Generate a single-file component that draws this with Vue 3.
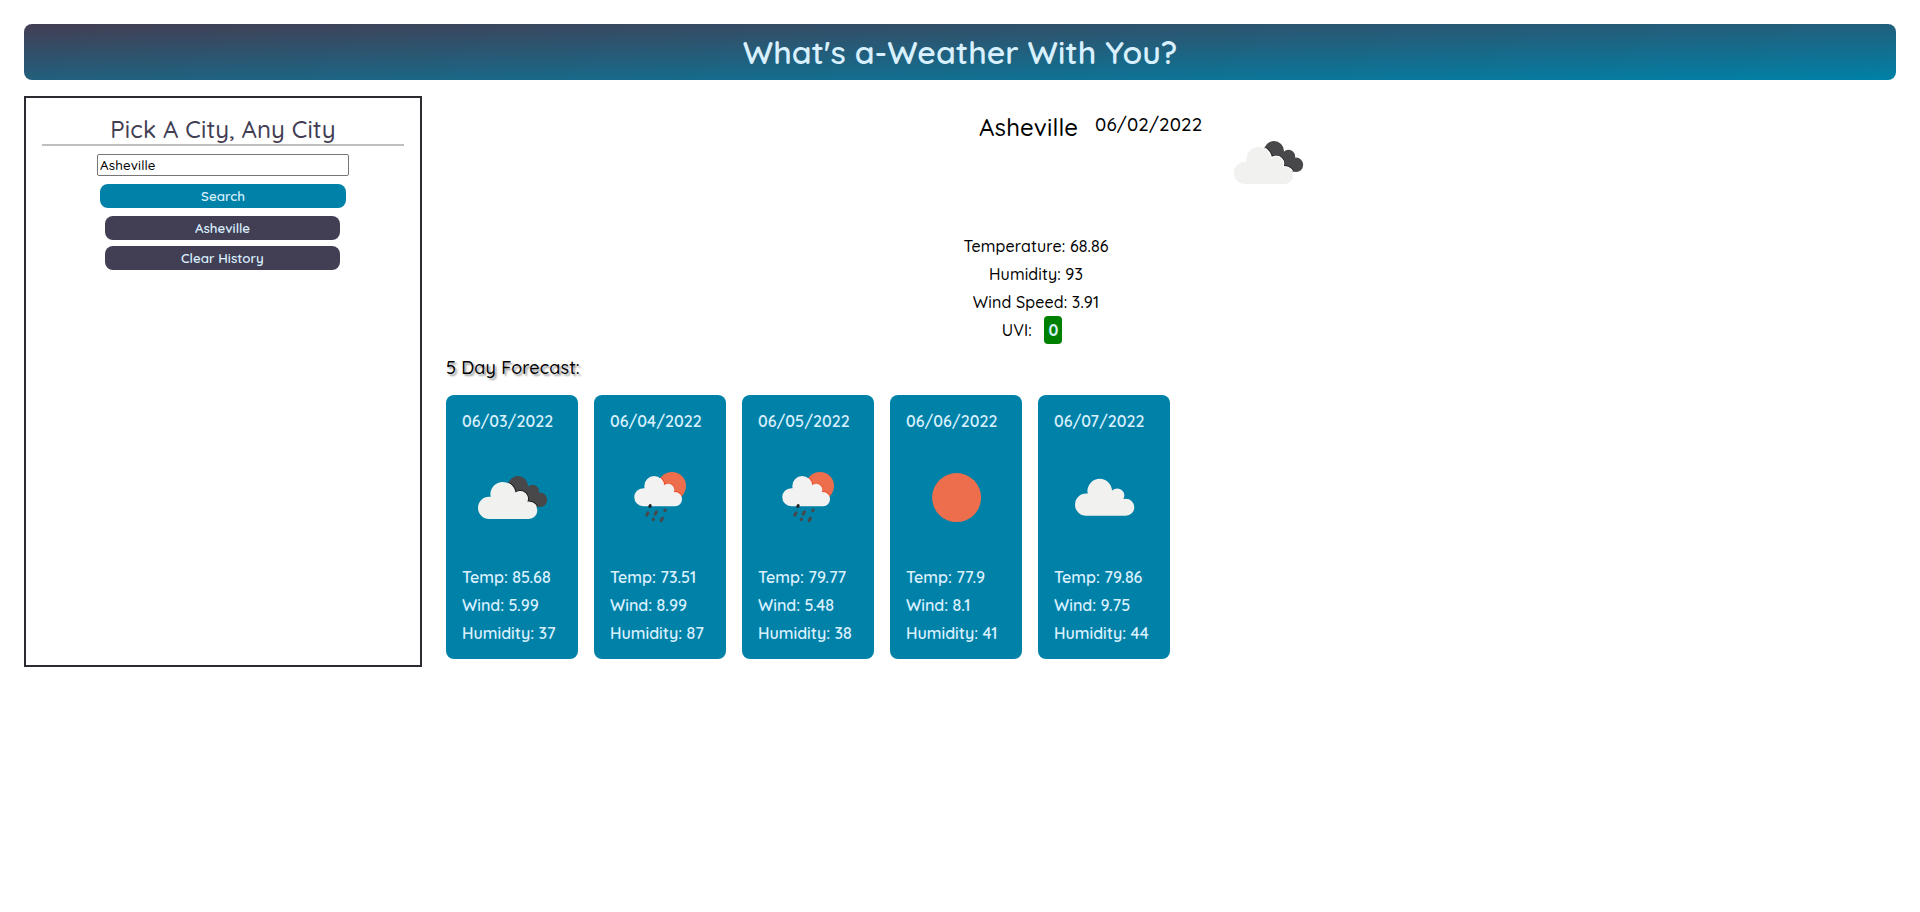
<script setup>
import { ref } from 'vue'

const city = ref('Asheville')

// Circle as a clockwise subpath, so that several of them join into one shape
const disc = (cx, cy, r) =>
  `M${cx - r} ${cy}a${r} ${r} 0 1 1 ${2 * r} 0a${r} ${r} 0 1 1 ${-2 * r} 0Z`

const cloud =
  disc(27.1, 59.9, 11.1) +
  disc(40.7, 46.3, 12.3) +
  disc(58.2, 50.8, 7.2) +
  disc(66.8, 62.5, 8.5) +
  'M27 71L28.3 49L40 50L52.5 46.5L64.6 54.2L66.8 71Z'
const darkCloud =
  disc(56, 38.1, 10) + disc(70.5, 43.5, 6.7) + disc(78, 51.8, 7.2) + 'M50 46L64 38L74 46L76 58L62 62Z'

const days = [
  { date: '06/03/2022', icon: 'broken', temp: '85.68', wind: '5.99', humidity: '37' },
  { date: '06/04/2022', icon: 'rain', temp: '73.51', wind: '8.99', humidity: '87' },
  { date: '06/05/2022', icon: 'rain', temp: '79.77', wind: '5.48', humidity: '38' },
  { date: '06/06/2022', icon: 'sun', temp: '77.9', wind: '8.1', humidity: '41' },
  { date: '06/07/2022', icon: 'cloud', temp: '79.86', wind: '9.75', humidity: '44' },
]
</script>

<template>
  <div class="page">
    <header class="banner">
      <h1>What's a-Weather With You?</h1>
    </header>

    <div class="columns">
      <aside class="picker">
        <h2>Pick A City, Any City</h2>
        <input v-model="city" type="text" />
        <button class="search">Search</button>
        <button class="history first">Asheville</button>
        <button class="history">Clear History</button>
      </aside>

      <main class="weather">
        <section class="current">
          <h2>Asheville</h2>
          <h3>06/02/2022</h3>
          <svg class="icon" viewBox="0 0 100 100">
            <defs>
              <clipPath id="dark-now"><path :d="darkCloud" /></clipPath>
            </defs>
            <path :d="darkCloud" fill="#48484a" />
            <g clip-path="url(#dark-now)" fill="none">
              <path :d="cloud" stroke="#1f1f20" stroke-width="3.6" />
              <path :d="cloud" stroke="#fff" stroke-width="2" />
            </g>
            <path :d="cloud" fill="#f1f1f0" />
          </svg>
        </section>

        <section class="stats">
          <p>Temperature: 68.86</p>
          <p>Humidity: 93</p>
          <p>Wind Speed: 3.91</p>
          <p>UVI: <span class="uvi">0</span></p>
        </section>

        <h3 class="forecast-title">5 Day Forecast:</h3>
        <section class="cards">
          <article v-for="(day, i) in days" :key="day.date" class="card">
            <p>{{ day.date }}</p>
            <svg class="icon" viewBox="0 0 100 100">
              <template v-if="day.icon === 'broken'">
                <defs>
                  <clipPath :id="'dark-' + i"><path :d="darkCloud" /></clipPath>
                </defs>
                <path :d="darkCloud" fill="#48484a" />
                <g :clip-path="`url(#dark-${i})`" fill="none">
                  <path :d="cloud" stroke="#1f1f20" stroke-width="3.2" />
                  <path :d="cloud" stroke="#fff" stroke-width="1.2" />
                </g>
                <path :d="cloud" fill="#f1f1f0" />
              </template>
              <template v-else-if="day.icon === 'rain'">
                <defs>
                  <clipPath :id="'sun-' + i"><circle cx="62" cy="38" r="14" /></clipPath>
                </defs>
                <circle cx="62" cy="38" r="14" fill="#ec6e4c" />
                <g :clip-path="`url(#sun-${i})`" fill="none">
                  <path :d="cloud" transform="translate(11.4 .4) scale(.805 .815)" stroke="#e8401c" stroke-width="2.6" />
                  <path :d="cloud" transform="translate(11.4 .4) scale(.805 .815)" stroke="#fff" stroke-width="1" />
                </g>
                <path :d="cloud" transform="translate(11.4 .4) scale(.805 .815)" fill="#f2f2f2" />
                <g stroke="#48484a" stroke-width="3" stroke-linecap="round">
                  <path d="M40.2 57.6L39.8 58.4" stroke="#222" />
                  <path d="M38 64.8L36.8 67.2M46.4 63.8L45.2 66.2M55.2 62.1L54.9 62.7M43.5 71L43.2 71.6M52.4 70.2L51.2 72.6" />
                </g>
              </template>
              <circle v-else-if="day.icon === 'sun'" cx="50.6" cy="49.6" r="24.5" fill="#ec6e4c" />
              <path v-else :d="cloud" transform="translate(5 -3.2)" fill="#f1f1f0" />
            </svg>
            <p>Temp: {{ day.temp }}</p>
            <p>Wind: {{ day.wind }}</p>
            <p>Humidity: {{ day.humidity }}</p>
          </article>
        </section>
      </main>
    </div>
  </div>
</template>

<style>
body {
  background: #fff;
}
</style>

<style scoped>
.page {
  padding: 24px;
  font-family: Quicksand, Lato, sans-serif;
  font-size: 16px;
  color: #000;
}
h1,
h2,
h3,
p {
  margin: 0;
  font-weight: 500;
  white-space: nowrap;
}
.banner {
  height: 56px;
  border-radius: 8px;
  background: linear-gradient(to bottom right, #433e53, #0081a7);
  color: #d9f0ff;
  text-align: center;
}
.banner h1 {
  font-size: 32px;
  font-weight: 600;
  line-height: 57px;
}
.columns {
  display: flex;
  align-items: flex-start;
  margin-top: 16px;
}
.picker {
  box-sizing: border-box;
  width: 398px;
  height: 571px;
  padding: 16px;
  border: 2px solid #2d2a32;
  display: flex;
  flex-direction: column;
  align-items: center;
}
.picker h2 {
  align-self: stretch;
  box-sizing: border-box;
  height: 32px;
  border-bottom: 2px solid #bfbfbf;
  color: #423e53;
  font-size: 24px;
  line-height: 31px;
  letter-spacing: 0.15px;
  text-align: center;
}
.picker input {
  box-sizing: border-box;
  width: 252px;
  height: 22px;
  margin-top: 8px;
  padding: 1px 2px;
  border: 1px solid #767676;
  border-radius: 2px;
  background: #fff;
  color: #000;
  font: 500 13.33px Quicksand, Lato, sans-serif;
  letter-spacing: 0.15px;
}
.picker button {
  height: 24px;
  padding: 0;
  border: 0;
  border-radius: 8px;
  color: #d9f0ff;
  font: 600 13.33px Quicksand, Lato, sans-serif;
}
.search {
  width: 246px;
  margin-top: 8px;
  background: #0081a7;
}
.history {
  width: 235px;
  margin-top: 6px;
  margin-right: 1px;
  background: #423e53;
}
.history.first {
  margin-top: 8px;
}
.weather {
  flex: 1;
  margin-left: 24px;
}
.current {
  display: flex;
  height: 133px;
  padding: 17px 0 0 533px;
}
.current h2 {
  width: 116px;
  font-size: 24px;
  line-height: 29px;
  letter-spacing: 0.15px;
}
.current h3 {
  width: 123px;
  font-size: 18.72px;
  line-height: 22px;
  letter-spacing: 0.15px;
}
.icon {
  display: block;
  flex: none;
  width: 100px;
  height: 100px;
}
.stats {
  height: 112px;
  margin-top: -14px;
  padding-right: 270px;
  text-align: center;
  line-height: 28px;
}
.stats p {
  letter-spacing: 0.13px;
}
.uvi {
  display: inline-block;
  height: 28px;
  width: 18px;
  margin: 0 8px;
  border-radius: 4px;
  background: green;
  color: #d9f0ff;
  font-weight: 700;
}
.forecast-title {
  margin-top: 12px;
  height: 39px;
  font-size: 18px;
  font-weight: 500;
  line-height: 24px;
  letter-spacing: 0.15px;
  text-shadow: 2px 2px 2px #999;
}
.cards {
  display: flex;
  gap: 16px;
}
.card {
  box-sizing: border-box;
  width: 132px;
  height: 264px;
  padding: 12px 16px;
  border-radius: 8px;
  background: #0081a7;
  color: #d9f0ff;
  line-height: 28px;
}
.card p {
  font-weight: 600;
}
.card .icon {
  margin: 13px 0 15px;
}
</style>
